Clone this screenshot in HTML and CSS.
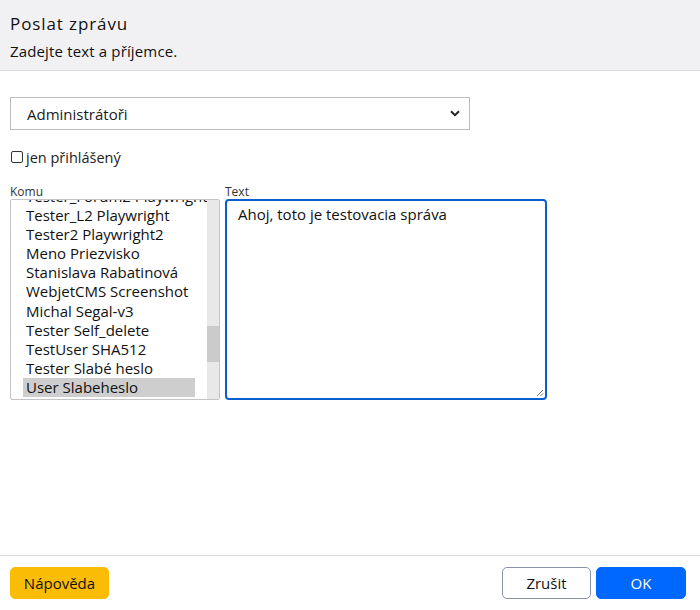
FILE: index.html
```html
<!DOCTYPE html>
<html lang="cs">
<head>
<meta charset="utf-8">
<title>Poslat zprávu</title>
<link rel="stylesheet" href="styles.css">
</head>
<body>
<div class="dialog">
  <div class="header">
    <div class="title">Poslat zprávu</div>
    <div class="subtitle">Zadejte text a příjemce.</div>
  </div>
  <div class="content">
    <div class="select-box">
      <span class="select-value">Administrátoři</span>
      <svg class="chev" width="10" height="7" viewBox="0 0 10 7"><path d="M1 1.2 L5 5.2 L9 1.2" fill="none" stroke="#222" stroke-width="2"/></svg>
    </div>
    <label class="check-row"><span class="checkbox"></span><span>jen přihlášený</span></label>
    <div class="fields">
      <div class="field field-list">
        <div class="label">Komu</div>
        <div class="listbox">
          <div class="list-viewport">
            <div class="list">
              <div class="item">Tester_Forum2 Playwright</div>
              <div class="item">Tester_L2 Playwright</div>
              <div class="item">Tester2 Playwright2</div>
              <div class="item">Meno Priezvisko</div>
              <div class="item">Stanislava Rabatinová</div>
              <div class="item">WebjetCMS Screenshot</div>
              <div class="item">Michal Segal-v3</div>
              <div class="item">Tester Self_delete</div>
              <div class="item">TestUser SHA512</div>
              <div class="item">Tester Slabé heslo</div>
              <div class="item selected">User Slabeheslo</div>
            </div>
          </div>
          <div class="scrollbar"><div class="thumb"></div></div>
        </div>
      </div>
      <div class="field field-text">
        <div class="label">Text</div>
        <div class="textarea">Ahoj, toto je testovacia správa<svg class="grip" width="8" height="8" viewBox="0 0 8 8"><path d="M7 1 L1 7 M7 4.5 L4.5 7" stroke="#777" stroke-width="1"/></svg></div>
      </div>
    </div>
  </div>
  <div class="footer">
    <button class="btn btn-help">Nápověda</button>
    <div class="spacer"></div>
    <button class="btn btn-cancel">Zrušit</button>
    <button class="btn btn-ok">OK</button>
  </div>
</div>
</body>
</html>
```
FILE: styles.css
```css
* { box-sizing: border-box; }
html, body { margin: 0; padding: 0; background: #fff; }
body {
  font-family: "Open Sans", "Noto Sans", sans-serif;
  color: #1a1a1a;
  width: 700px;
  height: 610px;
  overflow: hidden;
}
.dialog { display: flex; flex-direction: column; height: 610px; }
.header {
  background: #f1f1f4;
  border-bottom: 1px solid #dcdce0;
  height: 71px;
  padding: 13px 10px 0;
}
.title { font-size: 17px; line-height: 22px; color: #111; letter-spacing: 0.9px; }
.subtitle { font-size: 15px; line-height: 20px; margin-top: 6px; color: #111; letter-spacing: 0.15px; }
.content { flex: 1; padding: 26px 10px 0; }
.select-box {
  width: 460px; height: 33px;
  border: 1px solid #bdbdbd;
  display: flex; align-items: center;
  padding: 0 9px 0 16px;
  font-size: 15px;
}
.select-value { flex: 1; }
.check-row { display: flex; align-items: center; gap: 3px; margin-top: 17px; font-size: 14.5px; color: #222; height: 20px; }
.checkbox { width: 12px; height: 12px; border: 1px solid #333; border-radius: 2px; margin-left: 1px; }
.fields { display: flex; gap: 5px; margin-top: 18px; }
.label { font-size: 12px; line-height: 14px; color: #333; height: 14px; overflow: visible; }
.field-list { width: 210px; }
.field-text { width: 322px; }
.listbox {
  height: 201px; border: 1px solid #c4c4c4; border-radius: 2px;
  display: flex; overflow: hidden;
}
.list-viewport { flex: 1; overflow: hidden; padding: 0 12px; }
.list { margin-top: -13px; }
.item { font-size: 15px; line-height: 19.1px; padding-left: 3px; white-space: nowrap; color: #111; }
.item.selected { background: #cecece; }
.scrollbar { width: 12px; background: #e8e8e8; display: flex; flex-direction: column; padding-top: 126px; }
.thumb { height: 36px; background: #cbcbcb; }
.textarea {
  height: 201px;
  border: 2px solid #0a5fd0;
  border-radius: 4px;
  padding: 1px 11px;
  font-size: 15px;
  line-height: 24px;
  color: #111;
  display: flex; flex-direction: column; justify-content: flex-start;
}
.grip { align-self: flex-end; margin-top: auto; margin-right: -10px; margin-bottom: 0; }
.footer {
  border-top: 1px solid #dadadd;
  height: 55px;
  display: flex; align-items: flex-start;
  padding: 11px 14px 0 10px;
  gap: 5px;
}
.spacer { flex: 1; }
.btn {
  font-family: inherit; font-size: 15px;
  height: 32px; border-radius: 5px; border: 1px solid transparent;
  padding: 0; color: #111;
}
.btn-help { width: 99px; background: #fbbc05; border-color: #fbbc05; }
.btn-cancel { width: 89px; background: #fff; border-color: #8a92a6; }
.btn-ok { width: 90px; background: #0068ff; border-color: #0068ff; color: #fff; }
```
